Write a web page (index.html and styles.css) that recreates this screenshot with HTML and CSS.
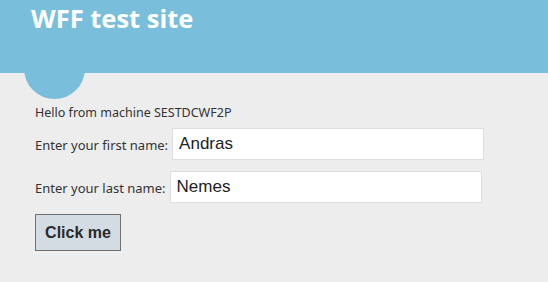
FILE: index.html
```html
<!DOCTYPE html>
<html>
<head>
<meta charset="utf-8">
<link rel="stylesheet" href="styles.css">
</head>
<body>
<header class="header">
  <h1 class="title">WFF test site</h1>
  <div class="bubble"></div>
</header>
<main class="content">
  <p class="hello">Hello from machine SESTDCWF2P</p>
  <div class="row">
    <label class="label">Enter your first name:</label>
    <input class="field" type="text" value="Andras">
  </div>
  <div class="row">
    <label class="label">Enter your last name:</label>
    <input class="field" type="text" value="Nemes">
  </div>
  <button class="btn">Click me</button>
</main>
</body>
</html>
```
FILE: styles.css
```css
html, body {
  margin: 0;
  padding: 0;
  background: #ededed;
  font-family: "Noto Sans", "Open Sans", sans-serif;
  color: #333;
}
.header {
  position: relative;
  height: 73px;
  background: #79bfdb;
  padding-left: 31px;
}
.title {
  margin: 0;
  padding-top: 1px;
  font-family: "Open Sans", sans-serif;
  font-weight: 700;
  font-size: 25.5px;
  color: #fff;
  line-height: 34px;
}
.bubble {
  position: absolute;
  left: 24px;
  top: 38px;
  width: 61px;
  height: 61px;
  border-radius: 50%;
  background: #79bfdb;
}
.content {
  padding: 32px 35px 0 35px;
  display: flex;
  flex-direction: column;
  align-items: flex-start;
}
.hello {
  margin: 0 0 7px 0;
  font-size: 12.5px;
  line-height: 16px;
}
.row {
  display: flex;
  align-items: center;
  gap: 4px;
  margin-bottom: 11px;
}
.label {
  font-size: 13px;
  padding-top: 2px;
}
.field {
  box-sizing: border-box;
  width: 312px;
  height: 32px;
  border: 1px solid #dedede;
  background: #fff;
  padding: 0 6px;
  font-family: "Liberation Sans", Arial, sans-serif;
  font-size: 17px;
  color: #222;
  outline: none;
}
.btn {
  box-sizing: border-box;
  width: 86px;
  height: 37px;
  background: #d4dce3;
  border: 1px solid #707070;
  font-family: "Liberation Sans", Arial, sans-serif;
  font-weight: 700;
  font-size: 16px;
  color: #2a2a2a;
  padding: 0;
}
```
